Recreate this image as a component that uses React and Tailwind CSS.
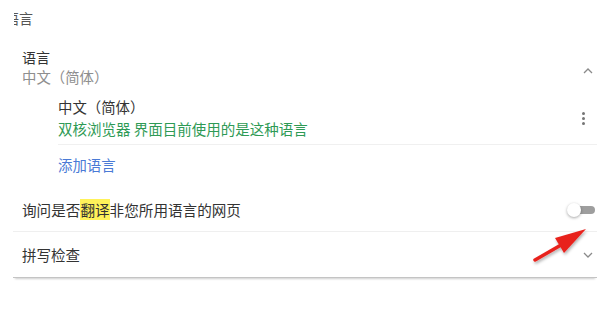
import React from 'react';

const font = { fontFamily: '"Noto Sans CJK SC", "Noto Sans", sans-serif' };

const ChevronUp = () => (
  <svg width="10" height="6" viewBox="0 0 10 6" className="text-[#8a8a8a]">
    <path d="M1 5 L5 1 L9 5" fill="none" stroke="currentColor" strokeWidth="1.3" />
  </svg>
);

const ChevronDown = () => (
  <svg width="10" height="6" viewBox="0 0 10 6" className="text-[#8a8a8a]">
    <path d="M1 1 L5 5 L9 1" fill="none" stroke="currentColor" strokeWidth="1.3" />
  </svg>
);

const Dots = () => (
  <div className="flex flex-col gap-[2px]">
    <span className="w-[3px] h-[3px] rounded-full bg-[#757575]" />
    <span className="w-[3px] h-[3px] rounded-full bg-[#757575]" />
    <span className="w-[3px] h-[3px] rounded-full bg-[#757575]" />
  </div>
);

const Toggle = () => (
  <div className="relative w-[28px] h-[14px] flex items-center">
    <div className="absolute left-[7px] right-0 h-[8px] rounded-full bg-[#9e9e9e]" />
    <div className="absolute left-0 w-[14px] h-[14px] rounded-full bg-white shadow-[0_1px_3px_rgba(0,0,0,0.35)]" />
  </div>
);

export default function App() {
  return (
    <div className="relative w-[597px] h-[330px] bg-white overflow-hidden text-[#333]" style={font}>
      {/* header, cut at the left edge */}
      <div className="h-[36px] flex items-center">
        <div className="ml-[14px] overflow-hidden">
          <span className="block ml-[-9px] text-[14px] text-[#555] whitespace-nowrap">语言</span>
        </div>
      </div>

      <div className="ml-[13px] mt-[11px] border-b border-[#c4c4c4] shadow-[0_3px_2px_-2px_rgba(0,0,0,0.2)]">
        <div className="flex pl-[9px] pr-[4px]">
          <div className="flex-1">
            <div className="h-[20px] leading-[20px] text-[14px] text-[#333]">语言</div>
            <div className="h-[20px] leading-[20px] text-[14.4px] text-[#8e8e8e]">中文（简体）</div>
          </div>
          <div className="pt-[21px]">
            <ChevronUp />
          </div>
        </div>

        <div className="ml-[45px] flex items-center border-b border-[#f0f0f0] pr-[12px] h-[58px] pt-[6px]">
          <div className="flex-1">
            <div className="h-[20px] leading-[20px] text-[14.4px] text-[#333]">中文（简体）</div>
            <div className="h-[24px] leading-[24px] text-[14.5px] text-[#2e9a55]">双核浏览器 界面目前使用的是这种语言</div>
          </div>
          <Dots />
        </div>

        <div className="pl-[45px] h-[40px] flex items-center text-[14.4px] text-[#4a7ad6]">添加语言</div>

        <div className="flex items-center pl-[9px] pr-[2px] h-[47px] border-b border-[#efefef] pt-[4px]">
          <div className="flex-1 text-[14.6px] whitespace-nowrap">
            询问是否<span className="bg-[#fff25a]">翻译</span>非您所用语言的网页
          </div>
          <Toggle />
        </div>

        <div className="flex items-center pl-[9px] pr-[4px] h-[45px]">
          <div className="flex-1 text-[14.5px]">拼写检查</div>
          <ChevronDown />
        </div>
      </div>

      {/* red arrow annotation */}
      <svg className="absolute left-[525px] top-[224px]" width="70" height="45" viewBox="0 0 70 45">
        <defs>
          <filter id="sh" x="-20%" y="-20%" width="140%" height="140%">
            <feDropShadow dx="1" dy="2" stdDeviation="1.5" floodColor="#000" floodOpacity="0.3" />
          </filter>
        </defs>
        <g filter="url(#sh)">
          <path d="M10 36 L36 21" stroke="#e8231f" strokeWidth="3.5" strokeLinecap="round" />
          <path d="M61 5 L30 14 L39 29 Z" fill="#e8231f" />
        </g>
      </svg>
    </div>
  );
}
